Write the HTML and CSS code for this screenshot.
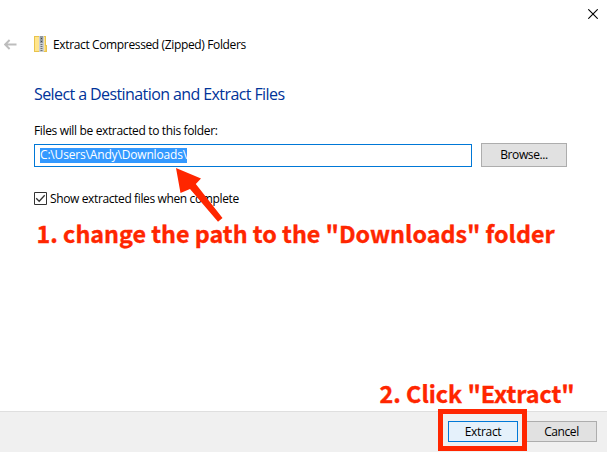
FILE: index.html
```html
<!DOCTYPE html>
<html lang="en">
<head>
<meta charset="utf-8">
<title>Extract Compressed (Zipped) Folders</title>
<link rel="stylesheet" href="styles.css">
</head>
<body>
<div class="dialog">
  <header class="titlebar">
    <svg class="close" viewBox="0 0 10 10"><path d="M.300.300l9.400 9.400M9.700.300l-9.400 9.400"/></svg>
  </header>
  <div class="caption">
    <svg class="back" viewBox="0 0 13 11"><path d="M12.500 5.500H1.200M5.600 1L1.100 5.500l4.500 4.500"/></svg>
    <svg class="zip" viewBox="0 0 13 16">
      <path fill="#e8c34c" d="M0 0h12v9h1v7H0z"/>
      <path fill="#ffe58c" d="M1 1h10v14H1z"/>
      <path fill="#f7d264" d="M11 10h1v5h-1z"/>
      <path fill="#c9cdd1" d="M5 0h5v16H5z"/>
      <path stroke="#6c7378" stroke-width="2" stroke-dasharray="1 1" d="M7.500 6v10"/>
      <path fill="#92989d" d="M6 0h3v7H6z"/>
      <path fill="#41474c" d="M7 2h1v1H7zM7 5h1v1H7z"/>
    </svg>
    <span class="app-name">Extract Compressed (Zipped) Folders</span>
  </div>
  <main class="content">
    <h1 class="heading">Select a Destination and Extract Files</h1>
    <label class="label">Files will be extracted to this folder:</label>
    <div class="path-row">
      <div class="field"><span class="selection">C:\Users\Andy\Downloads\</span></div>
      <div class="button browse">Browse...</div>
    </div>
    <div class="check-row">
      <svg class="checkbox" viewBox="0 0 13 13"><path fill="#fff" d="M.5.5h12v12H.5z"/><path stroke-width="1.300" d="M2.200 6.300l3 3 5.500-6"/></svg>
      <span class="check-label">Show extracted files when complete</span>
    </div>
  </main>
  <footer class="footer">
    <div class="button primary">Extract</div>
    <div class="button cancel">Cancel</div>
  </footer>
  <svg class="arrow" viewBox="0 0 50 56"><path d="M1 1L26 11.500 20.800 17 47.500 51 43 54.800 15 22 5.500 26z"/></svg>
  <div class="note note-path">1. change the path to the "Downloads" folder</div>
  <div class="note note-click">2. Click "Extract"</div>
  <div class="highlight"></div>
</div>
</body>
</html>
```
FILE: styles.css
```css
* { box-sizing: border-box; }
body {
  margin: 0;
  font: 12px/16px "Open Sans", "Noto Sans", sans-serif;
  color: #000;
  background: #fff;
}
.dialog {
  position: relative;
  display: flex;
  flex-direction: column;
  width: 607px;
  height: 452px;
  overflow: hidden;
  white-space: nowrap;
}
.titlebar {
  display: flex;
  justify-content: flex-end;
  height: 36px;
  padding: 9px 9px 0 0;
}
.close { width: 10px; height: 10px; stroke: #000; stroke-width: 1.1; fill: none; }
.caption { display: flex; align-items: center; height: 16px; padding-left: 4px; }
.back { width: 13px; height: 11px; stroke: #bdbdbd; stroke-width: 1.9; fill: none; }
.zip { width: 13px; height: 16px; margin: 0 6px 0 17px; }
.app-name { padding-top: 2px; letter-spacing: -.36px; }
.content { display: flex; flex-direction: column; flex: 1; padding: 30px 0 0 34px; }
.heading {
  margin: 0;
  font-size: 16px;
  line-height: 24px;
  font-weight: 400;
  color: #003399;
  letter-spacing: -.59px;
}
.label { margin-top: 17px; letter-spacing: -.35px; }
.path-row { display: flex; align-items: center; margin-top: 4px; gap: 9px; }
.field {
  display: flex;
  align-items: center;
  width: 438px;
  height: 23px;
  padding-left: 5px;
  border: 1px solid #0078d7;
}
.selection { color: #fff; background: #3399ff; height: 15px; line-height: 14px; letter-spacing: -.17px; }
.button {
  display: flex;
  align-items: center;
  justify-content: center;
  height: 21px;
  border: 1px solid #adadad;
  background: #e1e1e1;
  letter-spacing: -.4px;
}
.browse { width: 86px; height: 24px; }
.check-row { display: flex; align-items: center; margin-top: 23px; gap: 3px; }
.checkbox { width: 13px; height: 13px; stroke: #333; fill: none; }
.check-label { padding-top: 1px; letter-spacing: -.37px; }
.footer {
  display: flex;
  height: 41px;
  padding: 9px 10px 0 0;
  justify-content: flex-end;
  gap: 8px;
  border-top: 1px solid #dfdfdf;
  background: #f0f0f0;
}
.primary { width: 70px; border-color: #0078d7; background: #e5f1fb; letter-spacing: -.3px; }
.cancel { width: 71px; }
.arrow { position: absolute; left: 175px; top: 167px; width: 50px; height: 56px; fill: #ff2600; }
.note {
  position: absolute;
  font: 700 23.3px/32px "Noto Sans CJK SC", sans-serif;
  color: #ff2600;
  -webkit-text-stroke: .35px #ff2600;
}
.note-path { left: 36.500px; top: 217px; }
.note-click { left: 379.500px; top: 377px; }
.highlight {
  position: absolute;
  left: 438px;
  top: 409px;
  width: 89px;
  height: 42px;
  border: 5px solid #ff2600;
}
```
